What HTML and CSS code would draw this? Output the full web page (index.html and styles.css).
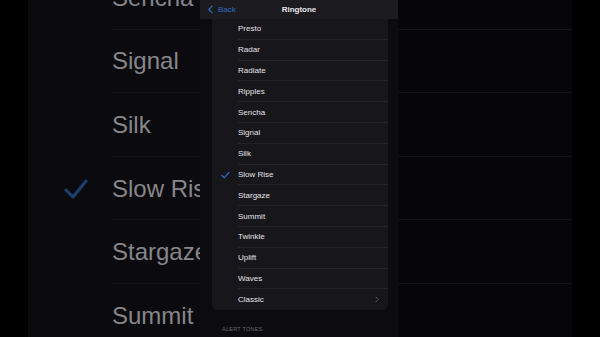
FILE: index.html
```html
<!DOCTYPE html>
<html>
<head>
<meta charset="utf-8">
<link rel="stylesheet" href="styles.css">
</head>
<body>
<div class="frame">
  <div class="edge"></div>
  <div class="bg">
    <div class="bg-list">
      <div class="bg-row"><span class="bg-check"></span><span class="bg-label">Sencha</span></div>
      <div class="bg-row"><span class="bg-check"></span><span class="bg-label">Signal</span></div>
      <div class="bg-row"><span class="bg-check"></span><span class="bg-label">Silk</span></div>
      <div class="bg-row"><span class="bg-check"><svg viewBox="0 0 24 20" width="24" height="20"><path d="M2 11 L9 18 L22 2" fill="none" stroke="#1c416f" stroke-width="3" stroke-linecap="round" stroke-linejoin="round"/></svg></span><span class="bg-label">Slow Rise</span></div>
      <div class="bg-row"><span class="bg-check"></span><span class="bg-label">Stargaze</span></div>
      <div class="bg-row"><span class="bg-check"></span><span class="bg-label">Summit</span></div>
    </div>
  </div>
  <div class="edge"></div>

  <div class="phone">
    <div class="nav">
      <div class="back">
        <svg viewBox="0 0 6 10" width="5" height="9"><path d="M5 1 L1 5 L5 9" fill="none" stroke="#2b6cc4" stroke-width="1.4" stroke-linecap="round" stroke-linejoin="round"/></svg>
        <span>Back</span>
      </div>
      <div class="title">Ringtone</div>
    </div>
    <div class="card">
      <div class="row"><span class="check"></span><span class="label">Presto</span></div>
      <div class="row"><span class="check"></span><span class="label">Radar</span></div>
      <div class="row"><span class="check"></span><span class="label">Radiate</span></div>
      <div class="row"><span class="check"></span><span class="label">Ripples</span></div>
      <div class="row"><span class="check"></span><span class="label">Sencha</span></div>
      <div class="row"><span class="check"></span><span class="label">Signal</span></div>
      <div class="row"><span class="check"></span><span class="label">Silk</span></div>
      <div class="row"><span class="check"><svg viewBox="0 0 10 8" width="9" height="8"><path d="M1 4.5 L3.8 7 L9 1" fill="none" stroke="#2e6fd0" stroke-width="1.3" stroke-linecap="round" stroke-linejoin="round"/></svg></span><span class="label">Slow Rise</span></div>
      <div class="row"><span class="check"></span><span class="label">Stargaze</span></div>
      <div class="row"><span class="check"></span><span class="label">Summit</span></div>
      <div class="row"><span class="check"></span><span class="label">Twinkle</span></div>
      <div class="row"><span class="check"></span><span class="label">Uplift</span></div>
      <div class="row"><span class="check"></span><span class="label">Waves</span></div>
      <div class="row last"><span class="check"></span><span class="label">Classic</span>
        <svg class="chev" viewBox="0 0 5 8" width="4" height="7"><path d="M1 1 L4 4 L1 7" fill="none" stroke="#5c5b61" stroke-width="1.1" stroke-linecap="round" stroke-linejoin="round"/></svg>
      </div>
    </div>
    <div class="section">ALERT TONES</div>
  </div>
</div>
</body>
</html>
```

FILE: styles.css
```css
* { box-sizing: border-box; }
html, body { margin: 0; padding: 0; background: #000; }
body { width: 600px; height: 337px; overflow: hidden; font-family: "Liberation Sans", Arial, sans-serif; }

.frame {
  position: relative;
  display: flex;
  width: 600px;
  height: 337px;
  overflow: hidden;
}
.edge { width: 28px; flex: none; background: #000; }
.edge:last-of-type { width: 29px; }
.bg {
  flex: 1;
  background: linear-gradient(to right, #0b0b0f 0, #0b0b0f 50%, #060609 50%, #060609 100%);
  overflow: hidden;
}
.bg-list { margin-top: -34px; }
.bg-row {
  display: flex;
  align-items: center;
  height: 63.6px;
  padding-left: 36px;
}
.bg-check { width: 24px; height: 20px; flex: none; margin-right: 24px; display: flex; }
.bg-label {
  flex: 1;
  height: 100%;
  display: flex;
  align-items: center;
  font-size: 24px;
  color: #86868b;
  border-bottom: 1px solid #141418;
  padding-top: 1px;
}

.phone {
  position: absolute;
  left: 200px;
  top: 0;
  width: 198px;
  height: 337px;
  background: #0c0b0f;
}
.nav {
  position: relative;
  height: 19px;
  background: #1c1b20;
  display: flex;
  align-items: center;
  justify-content: center;
}
.back {
  position: absolute;
  left: 8px;
  top: 0;
  height: 19px;
  display: flex;
  align-items: center;
  gap: 5px;
  color: #2b6cc4;
  font-size: 8px;
}
.title { color: #e6e6ea; font-size: 8px; font-weight: bold; }

.card {
  margin: 0 10px 0 12px;
  background: #17161b;
  border-radius: 0 0 6px 6px;
}
.row {
  display: flex;
  align-items: center;
  height: 20.8px;
  padding-left: 9px;
}
.check { width: 9px; height: 8px; flex: none; margin-right: 8px; display: flex; }
.label {
  flex: 1;
  height: 100%;
  display: flex;
  align-items: center;
  color: #e4e4e8;
  font-size: 8px;
  border-bottom: 1px solid #232227;
}
.row.last .label { border-bottom: none; }
.row.last { position: relative; }
.chev { position: absolute; right: 9px; top: 7px; }

.section {
  margin-top: 16px;
  padding-left: 22px;
  color: #68676d;
  font-size: 5.5px;
  letter-spacing: 0.25px;
}
```
